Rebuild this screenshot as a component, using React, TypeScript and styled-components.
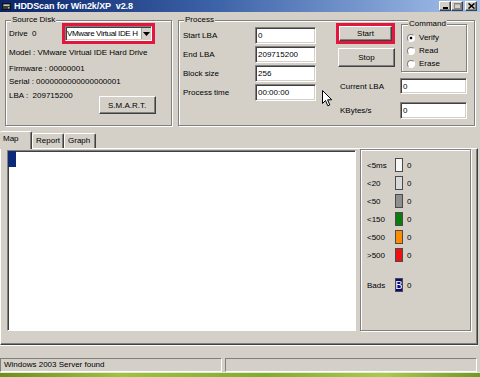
import styled, { createGlobalStyle } from "styled-components";

const FACE = "#d4d0c8";

const GlobalStyle = createGlobalStyle`
  html, body {
    margin: 0;
    padding: 0;
  }
  body {
    width: 480px;
    height: 377px;
    overflow: hidden;
    background: ${FACE};
    font-family: "Liberation Sans", Arial, sans-serif;
    font-size: 8px;
    color: #000;
  }
`;

const legendRows = [
  { label: "<5ms", color: "#f7f7f7" },
  { label: "<20", color: "#d9d9d9" },
  { label: "<50", color: "#8e8e8e" },
  { label: "<150", color: "#0c7d0c" },
  { label: "<500", color: "#ff8c00" },
  { label: ">500", color: "#ee1111" },
];

const processFields = [
  { label: "Start LBA", value: "0" },
  { label: "End LBA", value: "209715200" },
  { label: "Block size", value: "256" },
  { label: "Process time", value: "00:00:00" },
];

const tabs = [
  { label: "Map", active: true },
  { label: "Report", active: false },
  { label: "Graph", active: false },
];

export default function App() {
  return (
    <>
      <GlobalStyle />
      <Window>
        <TitleBar>
          <svg width="9" height="9" viewBox="0 0 9 9">
            <rect x="0.5" y="1.5" width="8" height="6" fill="#3a3a3a" stroke="#111" />
            <rect x="1.5" y="2.5" width="6" height="1.5" fill="#c8c8c8" />
            <rect x="6" y="5" width="1.5" height="1.5" fill="#7fd07f" />
          </svg>
          <TitleText>HDDScan for Win2k/XP&nbsp;&nbsp;v2.8</TitleText>
          <CaptionButtons>
            <CaptionButton>
              <svg width="7" height="6" viewBox="0 0 7 6">
                <rect x="1" y="4" width="5" height="2" fill="#000" />
              </svg>
            </CaptionButton>
            <CaptionButton>
              <svg width="7" height="6" viewBox="0 0 7 6">
                <rect x="0.5" y="0.5" width="6" height="5" fill="none" stroke="#888" />
                <rect x="0.5" y="0.5" width="6" height="1" fill="#888" />
              </svg>
            </CaptionButton>
            <CaptionButton $gap>
              <svg width="7" height="6" viewBox="0 0 7 6">
                <path d="M0.5 0.5 L6.5 5.5 M6.5 0.5 L0.5 5.5" stroke="#000" strokeWidth="1.6" />
              </svg>
            </CaptionButton>
          </CaptionButtons>
        </TitleBar>

        <TopRow>
          <GroupBox $width={167}>
            <GroupLegend>Source Disk</GroupLegend>
            <DriveRow>
              <DriveLabel>Drive&nbsp;&nbsp;0</DriveLabel>
              <Highlight>
                <Combo>
                  <ComboText>VMware Virtual IDE H</ComboText>
                  <ComboArrow>
                    <svg width="7" height="4" viewBox="0 0 7 4">
                      <path d="M0 0 H7 L3.5 4 Z" fill="#000" />
                    </svg>
                  </ComboArrow>
                </Combo>
              </Highlight>
            </DriveRow>
            <InfoLine $top={2}>Model : VMware Virtual IDE Hard Drive</InfoLine>
            <InfoLine $top={3}>Firmware : 00000001</InfoLine>
            <InfoLine $top={0}>Serial : 0000000000000000001</InfoLine>
            <LbaRow>
              <span>LBA :&nbsp;&nbsp;209715200</span>
              <SmartButton>S.M.A.R.T.</SmartButton>
            </LbaRow>
          </GroupBox>

          <GroupBox $width={297}>
            <GroupLegend>Process</GroupLegend>
            <ProcessBody>
              <FieldGrid>
                {processFields.map(({ label, value }) => (
                  <FieldRow key={label}>
                    <span>{label}</span>
                    <TextBox $width={61} $height={17}>{value}</TextBox>
                  </FieldRow>
                ))}
              </FieldGrid>

              <RightSection>
                <ActionsRow>
                  <ButtonColumn>
                    <Highlight>
                      <PushButton $width={53} $height={15}>Start</PushButton>
                    </Highlight>
                    <StopButton $width={57} $height={19}>Stop</StopButton>
                  </ButtonColumn>
                  <CommandBox>
                    <CommandLegend>Command</CommandLegend>
                    <RadioRow><Radio $checked />Verify</RadioRow>
                    <RadioRow><Radio />Read</RadioRow>
                    <RadioRow><Radio />Erase</RadioRow>
                  </CommandBox>
                </ActionsRow>
                <StatRow $top={6}>
                  <StatLabel>Current LBA</StatLabel>
                  <TextBox $width={67} $height={16}>0</TextBox>
                </StatRow>
                <StatRow $top={8}>
                  <StatLabel>KBytes/s</StatLabel>
                  <TextBox $width={67} $height={17}>0</TextBox>
                </StatRow>
              </RightSection>
            </ProcessBody>
          </GroupBox>
        </TopRow>

        <TabStrip>
          {tabs.map(({ label, active }) => (
            <Tab key={label} $active={active}>{label}</Tab>
          ))}
        </TabStrip>

        <TabPanel>
          <MapArea>
            <MapBlock />
          </MapArea>
          <LegendFrame>
            {legendRows.map(({ label, color }) => (
              <LegendRow key={label}>
                <span>{label}</span>
                <Swatch $color={color} />
                <span>0</span>
              </LegendRow>
            ))}
            <LegendRow $top={12}>
              <span>Bads</span>
              <Swatch $color="#0a0a80">
                <BadGlyph>B</BadGlyph>
              </Swatch>
              <span>0</span>
            </LegendRow>
          </LegendFrame>
        </TabPanel>

        <Band />

        <StatusBar>
          <StatusPane $width={222}>Windows 2003 Server found</StatusPane>
          <StatusPane $width={252} />
        </StatusBar>

        <Desktop />

        <Pointer width="11" height="17" viewBox="0 0 11 17">
          <path
            d="M0.5 0.5 L0.5 13.5 L3.5 10.5 L5.8 15.8 L7.8 15 L5.6 9.8 L9.8 9.8 Z"
            fill="#fff"
            stroke="#000"
            strokeWidth="1"
            strokeLinejoin="round"
          />
        </Pointer>
      </Window>
    </>
  );
}

const raised = `
  border: 1px solid;
  border-color: #fff #404040 #404040 #fff;
  box-shadow: inset -1px -1px 0 #808080;
  background: ${FACE};
`;

const sunken = `
  border: 1px solid;
  border-color: #808080 #fff #fff #808080;
  box-shadow: inset 1px 1px 0 #404040, inset -1px -1px 0 ${FACE};
  background: #fff;
`;

const Window = styled.div`
  position: relative;
  width: 480px;
  height: 377px;
  display: flex;
  flex-direction: column;
  background: ${FACE};
`;

const TitleBar = styled.div`
  height: 12px;
  flex: none;
  display: flex;
  align-items: center;
  gap: 3px;
  padding: 0 3px 0 2px;
  background: linear-gradient(90deg, #0a246a 0%, #3d63a8 45%, #a6c2ec 100%);
`;

const TitleText = styled.span`
  color: #fff;
  font-weight: bold;
  font-size: 9px;
  letter-spacing: -0.1px;
  white-space: nowrap;
`;

const CaptionButtons = styled.div`
  margin-left: auto;
  display: flex;
  align-self: flex-start;
  margin-top: 1px;
`;

const CaptionButton = styled.div<{ $gap?: boolean }>`
  ${raised}
  width: 10px;
  height: 8px;
  margin-left: ${({ $gap }) => ($gap ? "2px" : "0")};
  display: flex;
  align-items: center;
  justify-content: center;
`;

const TopRow = styled.div`
  height: 114px;
  flex: none;
  display: flex;
  gap: 6px;
  padding: 3px 0 0 5px;
  box-sizing: border-box;
`;

const GroupBox = styled.fieldset<{ $width: number }>`
  width: ${({ $width }) => $width}px;
  height: 111px;
  box-sizing: border-box;
  margin: 0;
  padding: 0 2px 0 3px;
  border: 1px solid #808080;
  box-shadow: inset 1px 1px 0 #fff, 1px 1px 0 #fff;
  min-width: 0;
`;

const GroupLegend = styled.legend`
  margin-left: 2px;
  padding: 0 1px;
  line-height: 10px;
  background: ${FACE};
`;

const DriveRow = styled.div`
  display: flex;
  align-items: center;
  margin-top: -2px;
  height: 21px;
`;

const DriveLabel = styled.span`
  width: 53px;
`;

const Highlight = styled.div`
  border: 3px solid #e3173e;
  display: flex;
`;

const Combo = styled.div`
  ${sunken}
  width: 87px;
  height: 15px;
  box-sizing: border-box;
  display: flex;
  align-items: stretch;
  padding: 1px;
`;

const ComboText = styled.span`
  flex: 1;
  min-width: 0;
  white-space: nowrap;
  line-height: 11px;
  letter-spacing: -0.35px;
`;

const ComboArrow = styled.span`
  width: 8px;
  flex: none;
  display: flex;
  align-items: center;
  justify-content: center;
  background: ${FACE};
  border-left: 1px solid #a0a0a0;
`;

const InfoLine = styled.div<{ $top: number }>`
  margin-top: ${({ $top }) => $top}px;
  height: 13px;
  line-height: 13px;
  white-space: nowrap;
`;

const LbaRow = styled.div`
  display: flex;
  align-items: flex-start;
  margin-top: 1px;
  line-height: 13px;
`;

const PushButton = styled.div<{ $width: number; $height: number }>`
  ${raised}
  width: ${({ $width }) => $width}px;
  height: ${({ $height }) => $height}px;
  box-sizing: border-box;
  display: flex;
  align-items: center;
  justify-content: center;
`;

const SmartButton = styled(PushButton).attrs({ $width: 57, $height: 18 })`
  margin: 7px 0 0 26px;
`;

const ProcessBody = styled.div`
  display: flex;
  align-items: flex-start;
  padding-left: 1px;
`;

const FieldGrid = styled.div`
  display: flex;
  flex-direction: column;
  gap: 2px;
  margin-top: 2px;
`;

const FieldRow = styled.div`
  display: grid;
  grid-template-columns: 72px 61px;
  align-items: center;
`;

const TextBox = styled.div<{ $width: number; $height: number }>`
  ${sunken}
  width: ${({ $width }) => $width}px;
  height: ${({ $height }) => $height}px;
  box-sizing: border-box;
  padding-left: 2px;
  display: flex;
  align-items: center;
`;

const RightSection = styled.div`
  margin-left: 20px;
  display: flex;
  flex-direction: column;
`;

const ActionsRow = styled.div`
  display: flex;
  align-items: flex-start;
`;

const ButtonColumn = styled.div`
  width: 59px;
  display: flex;
  flex-direction: column;
  align-items: flex-start;
  margin-top: -2px;
`;

const StopButton = styled(PushButton)`
  margin: 4px 0 0 2px;
`;

const CommandBox = styled.fieldset`
  width: 66px;
  height: 52px;
  box-sizing: border-box;
  margin: -5px 0 0 6px;
  padding: 3px 0 0 5px;
  border: 1px solid #808080;
  box-shadow: inset 1px 1px 0 #fff, 1px 1px 0 #fff;
  min-width: 0;
`;

const CommandLegend = styled.legend`
  padding: 0 1px;
  margin-left: 1px;
  line-height: 8px;
  background: ${FACE};
`;

const RadioRow = styled.div`
  height: 13px;
  display: flex;
  align-items: center;
  gap: 4px;
`;

const Radio = styled.span<{ $checked?: boolean }>`
  width: 8px;
  height: 8px;
  box-sizing: border-box;
  border-radius: 50%;
  border: 1px solid;
  border-color: #808080 #fff #fff #808080;
  background: ${({ $checked }) =>
    $checked ? "radial-gradient(circle, #000 0 1.5px, #fff 1.6px)" : "#fff"};
`;

const StatRow = styled.div<{ $top: number }>`
  display: flex;
  align-items: center;
  margin-top: ${({ $top }) => $top}px;
`;

const StatLabel = styled.span`
  width: 60px;
  padding-left: 4px;
`;

const TabStrip = styled.div`
  height: 17px;
  flex: none;
  margin-top: 5px;
  display: flex;
  align-items: flex-end;
`;

const Tab = styled.div<{ $active: boolean }>`
  width: 32px;
  box-sizing: border-box;
  height: ${({ $active }) => ($active ? "18px" : "15px")};
  margin-bottom: ${({ $active }) => ($active ? "-1px" : "0")};
  position: relative;
  z-index: ${({ $active }) => ($active ? 1 : 0)};
  padding-left: 3px;
  line-height: 14px;
  background: ${FACE};
  border-top: 1px solid #fff;
  border-left: ${({ $active }) => ($active ? "0" : "1px solid #fff")};
  border-right: 1px solid #404040;
  border-radius: 2px 2px 0 0;
  box-shadow: inset -1px 0 0 #808080;
`;

const TabPanel = styled.div`
  height: 197px;
  flex: none;
  width: 478px;
  box-sizing: border-box;
  display: flex;
  align-items: flex-start;
  gap: 4px;
  padding: 1px 4px 0 6px;
  border: 1px solid;
  border-color: #fff #404040 #404040 #fff;
  box-shadow: inset -1px -1px 0 #808080;
`;

const MapArea = styled.div`
  width: 349px;
  height: 181px;
  box-sizing: border-box;
  border: 1px solid;
  border-color: #808080 #fff #fff #808080;
  box-shadow: inset 1px 1px 0 #404040;
  background: #fff;
`;

const MapBlock = styled.div`
  width: 8px;
  height: 16px;
  background: #0c2a78;
`;

const LegendFrame = styled.div`
  width: 111px;
  height: 182px;
  box-sizing: border-box;
  margin-top: -1px;
  padding: 6px 0 0 6px;
  border: 1px solid #808080;
  box-shadow: inset 1px 1px 0 #fff, 1px 1px 0 #fff;
`;

const LegendRow = styled.div<{ $top?: number }>`
  height: 18px;
  margin-top: ${({ $top }) => $top ?? 0}px;
  display: grid;
  grid-template-columns: 24px 8px auto;
  column-gap: 4px;
  align-items: center;
`;

const Swatch = styled.div<{ $color: string }>`
  width: 8px;
  height: 14px;
  box-sizing: border-box;
  border: 1px solid #4a4a4a;
  background: ${({ $color }) => $color};
  display: flex;
  align-items: center;
  justify-content: center;
  overflow: hidden;
`;

const BadGlyph = styled.span`
  color: #fff;
  font-size: 11px;
  line-height: 12px;
`;

const Band = styled.div`
  height: 13px;
  flex: none;
  border-top: 1px solid #fff;
  box-sizing: border-box;
  width: 478px;
`;

const StatusBar = styled.div`
  height: 14px;
  flex: none;
  display: flex;
  gap: 3px;
`;

const StatusPane = styled.div<{ $width: number }>`
  width: ${({ $width }) => $width}px;
  box-sizing: border-box;
  border: 1px solid;
  border-color: #808080 #fff #fff #808080;
  padding-left: 3px;
  line-height: 12px;
  white-space: nowrap;
`;

const Desktop = styled.div`
  flex: 1;
  background: linear-gradient(90deg, #6b8f1a 0%, #9cc43c 25%, #7fae2a 55%, #a8cc4a 80%, #6e9a22 100%);
  border-top: 1px solid #e8e8e0;
`;

const Pointer = styled.svg`
  position: absolute;
  left: 322px;
  top: 90px;
`;
